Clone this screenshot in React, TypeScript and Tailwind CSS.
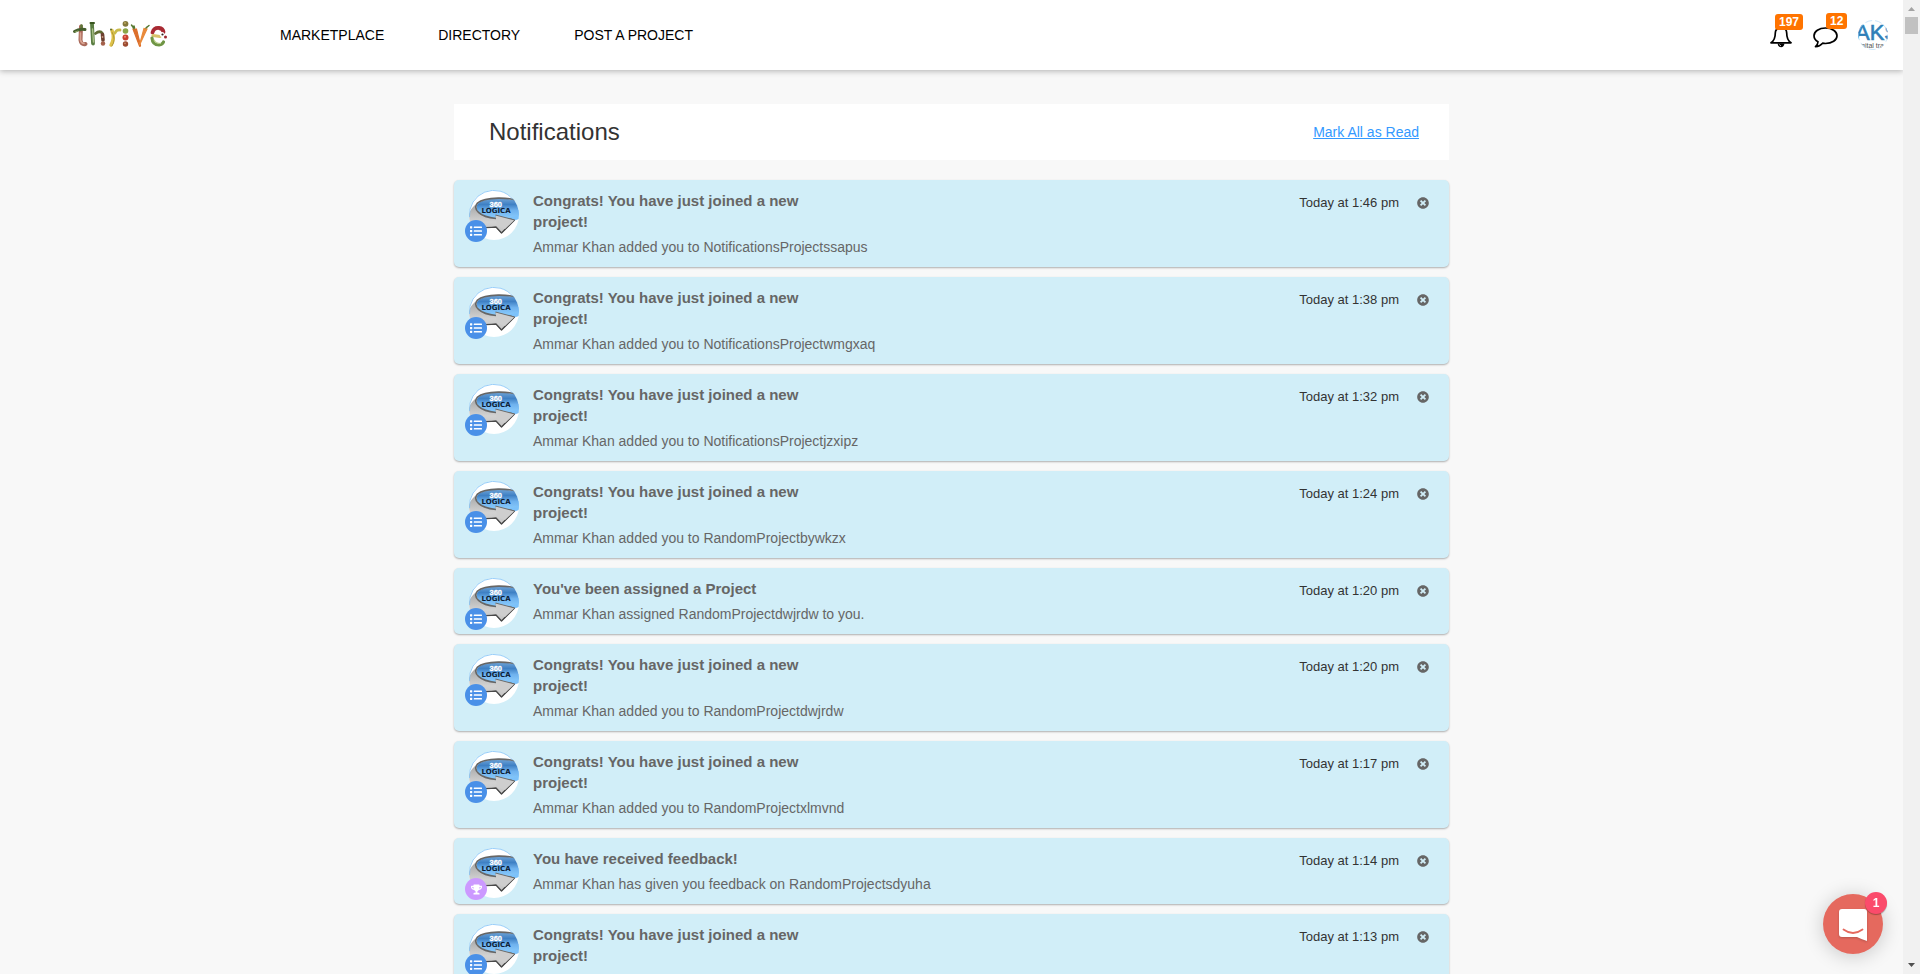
import React from "react";
import { FaList, FaTimesCircle, FaTrophy } from "react-icons/fa";

type Kind = "project" | "feedback";

interface Notice {
  title: string;
  body: string;
  time: string;
  kind: Kind;
}

const JOINED = "Congrats! You have just joined a new project!";

const NOTICES: Notice[] = [
  { title: JOINED, body: "Ammar Khan added you to NotificationsProjectssapus", time: "Today at 1:46 pm", kind: "project" },
  { title: JOINED, body: "Ammar Khan added you to NotificationsProjectwmgxaq", time: "Today at 1:38 pm", kind: "project" },
  { title: JOINED, body: "Ammar Khan added you to NotificationsProjectjzxipz", time: "Today at 1:32 pm", kind: "project" },
  { title: JOINED, body: "Ammar Khan added you to RandomProjectbywkzx", time: "Today at 1:24 pm", kind: "project" },
  { title: "You've been assigned a Project", body: "Ammar Khan assigned RandomProjectdwjrdw to you.", time: "Today at 1:20 pm", kind: "project" },
  { title: JOINED, body: "Ammar Khan added you to RandomProjectdwjrdw", time: "Today at 1:20 pm", kind: "project" },
  { title: JOINED, body: "Ammar Khan added you to RandomProjectxlmvnd", time: "Today at 1:17 pm", kind: "project" },
  { title: "You have received feedback!", body: "Ammar Khan has given you feedback on RandomProjectsdyuha", time: "Today at 1:14 pm", kind: "feedback" },
  { title: JOINED, body: "", time: "Today at 1:13 pm", kind: "project" },
];

/* Brand mark: an arrangement of fruit and vegetables. */
function ThriveLogo() {
  return (
    <svg width="96" height="30" viewBox="0 0 96 30" role="img" aria-label="thrive" fill="none" strokeLinecap="round">
      {/* sausage with a cucumber laid across */}
      <path d="M9 6.500 L8.500 20 Q9 25 13.500 24" stroke="#a9695a" strokeWidth="4" />
      <path d="M8.500 13 L8.500 20 Q9 23 12 23.500" stroke="#d9a390" strokeWidth="1.600" />
      <path d="M9.500 5.500 L9.500 9" stroke="#5d7a3a" strokeWidth="2.400" />
      <path d="M2.500 11.500 Q7 8.500 13 9.500" stroke="#465f2e" strokeWidth="3" />
      <path d="M3 12 L6 11" stroke="#8fa763" strokeWidth="1" />
      {/* asparagus and mushroom */}
      <path d="M20 4 L21 23.500" stroke="#5a7d42" strokeWidth="3.800" />
      <path d="M20.500 9 L21.500 22" stroke="#a9bf85" strokeWidth="1.400" />
      <path d="M18.500 3 L22 3" stroke="#39561f" strokeWidth="2" />
      <path d="M23.500 13.500 Q28 10 30.500 13.500" stroke="#5f6c33" strokeWidth="2.800" />
      <path d="M30.500 14.500 L31 20" stroke="#6d4030" strokeWidth="3.600" />
      <circle cx="31" cy="23.500" r="2.200" fill="#a4604a" />
      <circle cx="30.500" cy="17" r="0.900" fill="#c79a7e" />
      {/* bananas */}
      <path d="M40 10.500 Q43 18 39 25" stroke="#dfc24a" strokeWidth="3.400" />
      <path d="M40 12 Q44.500 20 40 26" stroke="#a8922f" strokeWidth="0.900" />
      <path d="M43 13 Q44.500 9.500 48 10" stroke="#c9bb4c" strokeWidth="2.800" />
      <circle cx="39" cy="9.500" r="1" fill="#5d6a28" />
      {/* stacked fruit */}
      <circle cx="53.500" cy="3.800" r="2.900" fill="#84783c" />
      <circle cx="53" cy="3" r="1.100" fill="#b7a45b" />
      <circle cx="53.500" cy="11" r="2.800" fill="#8ba648" />
      <circle cx="53.500" cy="17.500" r="3" fill="#c8402f" />
      <circle cx="53" cy="16.800" r="1" fill="#ee8776" />
      <circle cx="53.500" cy="24" r="2.700" fill="#9c4a30" />
      <circle cx="53" cy="23.300" r="0.900" fill="#c98a68" />
      {/* carrots */}
      <path d="M61 9 L64.500 9 L68.500 25.500 Q68 27 67.500 26 Z" fill="#dc6f2c" stroke="#dc6f2c" strokeWidth="1.200" />
      <path d="M75 9 L72 8.500 L67.500 25 Z" fill="#e98a3b" stroke="#e98a3b" strokeWidth="1.200" />
      <path d="M62 8.500 L59.500 5 M62.500 8 L62 6 M74 8 L77 5.500 M74 8 L75 7" stroke="#55782f" strokeWidth="1.500" />
      {/* pepper, egg and greens */}
      <path d="M80.500 12.500 Q82 7.500 87 8 Q91 8.500 91.500 12" stroke="#a82a33" strokeWidth="3.800" />
      <path d="M81 15.500 L88 16.500" stroke="#d8c36b" strokeWidth="3.200" />
      <circle cx="90" cy="14.500" r="2.400" fill="#fff" />
      <circle cx="90.500" cy="14.500" r="1.100" fill="#33221f" />
      <circle cx="93.500" cy="17" r="1.500" fill="#9e2730" />
      <path d="M80 18 Q80.500 25 87 25 Q90.500 24.500 91.500 22" stroke="#6f9545" strokeWidth="3.200" />
      <path d="M82 20 Q84 23.500 88.500 23.500" stroke="#b7cf83" strokeWidth="1.200" />
    </svg>
  );
}

function BellIcon() {
  return (
    <svg width="22" height="22" viewBox="0 0 22 22" fill="none" stroke="#000" strokeWidth="1.700" strokeLinejoin="round" aria-hidden="true">
      <path d="M1 16.800 Q5.300 14 5.300 7 Q5.300 2 11 2 Q16.700 2 16.700 7 Q16.700 14 21 16.800 Z" />
      <path d="M7.500 17.500 Q8 21.200 11 21.200 Q14 21.200 14.500 17.500 Z" fill="#000" stroke="none" />
      <path d="M9.300 18.300 Q9.800 19.600 11 19.800" stroke="#fff" strokeWidth="0.700" />
    </svg>
  );
}

function ChatIcon() {
  return (
    <svg width="25" height="21" viewBox="0 0 25 21" fill="none" stroke="#000" strokeWidth="1.700" strokeLinejoin="round" aria-hidden="true">
      <path d="M12.500 1 C18.900 1 24 4.400 24 8.800 C24 13.200 18.900 16.500 12.500 16.500 C11.500 16.500 10.500 16.400 9.600 16.200 C8 18 5.500 19.500 2.500 19.700 C4 18.500 4.900 16.700 5 14.800 C2.500 13.400 1 11.200 1 8.800 C1 4.400 6.100 1 12.500 1 Z" />
    </svg>
  );
}

function AccountAvatar() {
  return (
    <svg width="30" height="30" viewBox="0 0 30 30" role="img" aria-label="Account">
      <defs>
        <clipPath id="account-clip"><circle cx="15" cy="15" r="15" /></clipPath>
      </defs>
      <g clipPath="url(#account-clip)">
        <rect width="30" height="30" fill="#fff" />
        <text x="-3" y="20" fontFamily="Liberation Sans, sans-serif" fontSize="22" fill="#2f7fb8" stroke="#2f7fb8" strokeWidth="0.600">AKS</text>
        <text x="3" y="27.500" fontFamily="Liberation Sans, sans-serif" fontSize="7" fill="#555">gital tra</text>
      </g>
      <circle cx="15" cy="15" r="14.500" fill="none" stroke="#a9d4f5" strokeWidth="0.600" strokeDasharray="7 3" />
    </svg>
  );
}

function CompanyAvatar({ id }: { id: string }) {
  const clip = `company-clip-${id}`;
  const blue = `company-blue-${id}`;
  const grey = `company-grey-${id}`;
  return (
    <svg width="50" height="50" viewBox="0 0 50 50" role="img" aria-label="360 Logica" className="block">
      <defs>
        <clipPath id={clip}><circle cx="25" cy="25" r="25" /></clipPath>
        <linearGradient id={blue} x1="0" y1="0" x2="0" y2="1">
          <stop offset="0" stopColor="#6fa3d6" />
          <stop offset="0.300" stopColor="#3e80c4" />
          <stop offset="0.600" stopColor="#6fb2ee" />
          <stop offset="1" stopColor="#8accfd" />
        </linearGradient>
        <linearGradient id={grey} x1="0" y1="0" x2="0" y2="1">
          <stop offset="0" stopColor="#a8a8a8" />
          <stop offset="0.600" stopColor="#d2d2d2" />
          <stop offset="1" stopColor="#c4c4c4" />
        </linearGradient>
      </defs>
      <g clipPath={`url(#${clip})`}>
        <rect width="50" height="50" fill="#fff" />
        {/* blue sweep behind the arrow head */}
        <path d="M28 20 H50 V29 L44 31 L28 28 Z" fill="#7cc2fa" />
        {/* grey arrow that wraps round the ellipse */}
        <path d="M6 15 C1.500 19 -1 24 -1 30 L-1 36.500 C8 38.500 18 37.500 27 37 L32.500 43 L45.500 30 L26.500 25 L27 28.500 C18 27.500 8 24 7.500 18 Z" fill={`url(#${grey})`} />
        <path d="M27 37 L32.500 43 L45.500 30 L26.500 25 L27 28.500" fill="none" stroke="#555" strokeWidth="1" strokeLinejoin="round" />
        <path d="M0 37 C9 38.500 18 37.500 27 37 L32.500 43 L45.500 30" fill="none" stroke="#4a4a4a" strokeWidth="1.300" strokeLinejoin="round" />
        <path d="M50 11.500 C42 7.500 16 7 9.500 13 C4 19 10 26 27 28.500 L26.500 25 L38 28 L50 25 Z" fill={`url(#${blue})`} />
        <path d="M50 11.500 C42 7 16 6.500 8.500 13 C3.500 19 10 27 27 28.500" fill="none" stroke="#666" strokeWidth="1.600" />
        <path d="M26.500 25 L45.500 30 L36 39 L28 36 Z" fill="#cecece" />
        <path d="M26.500 25 L45.500 30" fill="none" stroke="#666" strokeWidth="0.900" />
        <text x="20.500" y="17" fontFamily="Liberation Sans, sans-serif" fontWeight="700" fontSize="7.500" fill="#fff" stroke="#fff" strokeWidth="0.300">360</text>
        <text x="12.500" y="23" fontFamily="DejaVu Sans, sans-serif" fontWeight="700" fontSize="7" fill="#0c1c33">LOGICA</text>
      </g>
      <path d="M0.500 27 A24.500 24.500 0 0 1 44 9.500" fill="none" stroke="#7fc1f8" strokeWidth="0.800" />
    </svg>
  );
}

function KindBadge({ kind }: { kind: Kind }) {
  return kind === "project" ? (
    <span className="absolute top-[30px] -left-1 flex size-[22px] items-center justify-center rounded-full bg-[#4a90e8] text-white">
      <FaList size={12} />
    </span>
  ) : (
    <span className="absolute top-[30px] -left-1 flex size-[22px] items-center justify-center rounded-full bg-[#cc99ff] text-white">
      <FaTrophy size={11} />
    </span>
  );
}

function NoticeCard({ notice, id }: { notice: Notice; id: string }) {
  return (
    <li className="flex items-start rounded-[5px] bg-[#d1eef8] py-2.5 pr-5 pl-[15px] shadow-[0_1px_2px_rgba(0,0,0,0.3)]">
      <div className="relative -mb-1 size-[50px] shrink-0">
        <CompanyAvatar id={id} />
        <KindBadge kind={notice.kind} />
      </div>
      <div className="ml-3.5 min-w-0 flex-1">
        <h2 className="max-w-[320px] text-[15px] leading-[21px] font-bold text-[#666]">{notice.title}</h2>
        <p className="mt-[5px] min-h-5 text-[14px] leading-5 text-[#666]">{notice.body}</p>
      </div>
      <time className="mt-[3px] text-[13px] leading-5 text-[#333]">{notice.time}</time>
      <button type="button" aria-label="Dismiss notification" className="mt-[7px] ml-[18px] text-[#666]">
        <FaTimesCircle size={12} />
      </button>
    </li>
  );
}

function Header() {
  const links = ["MARKETPLACE", "DIRECTORY", "POST A PROJECT"];
  return (
    <header className="relative z-10 flex h-[70px] shrink-0 items-center bg-white pr-[15px] pl-[72px] shadow-[0_1px_6px_rgba(0,0,0,0.3)]">
      <a href="#home">
        <ThriveLogo />
      </a>
      <nav className="ml-28 flex gap-[54px] text-[14px] leading-5 text-black">
        {links.map((label) => (
          <a key={label} href="#section">{label}</a>
        ))}
      </nav>
      <div className="ml-auto flex items-center">
        <button type="button" aria-label="Alerts" className="relative mt-1">
          <BellIcon />
          <span className="absolute -top-3 left-[5px] rounded-[3px] bg-[#ff7400] px-1 text-[12px] leading-4 font-bold text-white">197</span>
        </button>
        <button type="button" aria-label="Messages" className="relative mt-1 ml-[21px]">
          <ChatIcon />
          <span className="absolute -top-3.5 left-[13px] rounded-[3px] bg-[#ff7400] px-1 text-[12px] leading-4 font-bold text-white">12</span>
        </button>
        <button type="button" aria-label="Account menu" className="ml-5">
          <AccountAvatar />
        </button>
      </div>
    </header>
  );
}

function ScrollRail() {
  return (
    <div aria-hidden="true" className="z-20 flex w-[17px] shrink-0 flex-col items-center justify-between bg-[#f1f1f1]">
      <div className="flex flex-col items-center">
        <svg width="17" height="17" viewBox="0 0 17 17"><path d="M5 11 L8.500 7 L12 11 Z" fill="#a3a3a3" /></svg>
        <div className="h-[17px] w-[13px] bg-[#c1c1c1]" />
      </div>
      <svg width="17" height="17" viewBox="0 0 17 17"><path d="M5 6 L12 6 L8.500 10 Z" fill="#505050" /></svg>
    </div>
  );
}

function ChatLauncher() {
  return (
    <button type="button" aria-label="Open messenger" className="fixed right-[37px] bottom-5 z-20 flex size-[60px] items-center justify-center rounded-full bg-[#e5695e] shadow-[0_2px_20px_rgba(0,0,0,0.2)]">
      <svg width="28" height="32" viewBox="0 0 28 32" aria-hidden="true" className="mt-0.5 drop-shadow-[0_1px_1px_rgba(0,0,0,0.2)]">
        <path d="M3 0 H25 Q28 0 28 3 V32 Q23 30.500 18 28 H3 Q0 28 0 25 V3 Q0 0 3 0 Z" fill="#fff" />
        <path d="M4.500 20.500 Q14 27.500 23.500 20.500" fill="none" stroke="#e5695e" strokeWidth="1.800" strokeLinecap="round" />
      </svg>
      <span className="absolute -top-0.5 -right-1 flex size-[22px] items-center justify-center rounded-full bg-[#fb4b6b] text-[12px] leading-4 font-bold text-white shadow-[0_1px_1px_rgba(0,0,0,0.3)]">1</span>
    </button>
  );
}

export default function App() {
  return (
    <div className="flex h-screen bg-[#f8f8f8] font-['Liberation_Sans',Arial,sans-serif]">
      <div className="flex min-w-0 flex-1 flex-col">
        <Header />
        <main className="min-h-0 flex-1 overflow-y-auto px-4 pt-[34px] [scrollbar-width:none]">
          <div className="mx-auto w-full max-w-[995px]">
            <div className="flex h-14 items-center justify-between bg-white pr-[30px] pl-[35px]">
              <h1 className="text-[24px] leading-8 text-[#333]">Notifications</h1>
              <a href="#read" className="text-[14px] leading-5 text-[#3399ff] underline">Mark All as Read</a>
            </div>
            <ul className="mt-5 flex flex-col gap-2.5 pb-2.5">
              {NOTICES.map((notice, i) => (
                <NoticeCard key={i} id={String(i)} notice={notice} />
              ))}
            </ul>
          </div>
        </main>
      </div>
      <ScrollRail />
      <ChatLauncher />
    </div>
  );
}
